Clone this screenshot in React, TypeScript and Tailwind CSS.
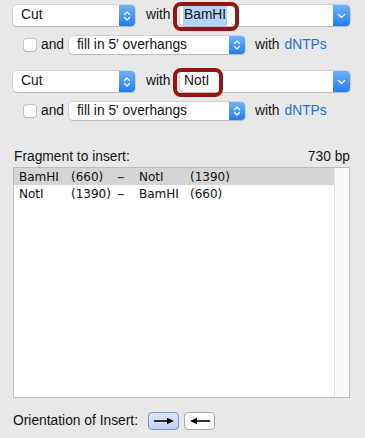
import React from "react";

const Stepper = () => (
  <div className="flex h-full w-[16px] items-center justify-center rounded-r-[4px] bg-gradient-to-b from-[#6cb1fb] to-[#1f7cf5]">
    <svg width="8" height="12" viewBox="0 0 8 12" fill="none" stroke="white" strokeWidth="1.3" strokeLinecap="round" strokeLinejoin="round">
      <path d="M1.5 4.5 L4 2 L6.5 4.5" />
      <path d="M1.5 7.5 L4 10 L6.5 7.5" />
    </svg>
  </div>
);

const Popup = ({ label, w, h }: { label: string; w: string; h: string }) => (
  <div className={`flex ${w} ${h} items-stretch rounded-[4px] bg-white shadow-[0_0_0_0.5px_rgba(0,0,0,0.18),0_1px_1px_rgba(0,0,0,0.12)]`}>
    <div className="flex flex-1 items-center pl-[8px]">{label}</div>
    <Stepper />
  </div>
);

const CutRow = ({ enzyme, hl }: { enzyme: string; hl: string }) => (
  <div className="flex flex-col">
    <div className="flex h-[21px] items-center">
      <Popup label="Cut" w="w-[122px]" h="h-[21px]" />
      <span className="w-[45px] pl-[11px]">with</span>
      <div className="relative flex h-[21px] w-[170px] items-stretch rounded-[4px] bg-white shadow-[0_0_0_0.5px_rgba(0,0,0,0.2),0_1px_1px_rgba(0,0,0,0.1)]">
        <div className="flex flex-1 items-center pl-[3px]">
          <span className={enzyme === "BamHI" ? "bg-[#b3d4fc] px-[1px]" : "px-[1px]"}>{enzyme}</span>
        </div>
        <div className="flex w-[17px] items-center justify-center rounded-r-[4px] bg-gradient-to-b from-[#6cb1fb] to-[#1f7cf5]">
          <svg width="9" height="6" viewBox="0 0 9 6" fill="none" stroke="white" strokeWidth="1.4" strokeLinecap="round" strokeLinejoin="round">
            <path d="M1.5 1.5 L4.5 4.5 L7.5 1.5" />
          </svg>
        </div>
        <div className={`absolute left-[-7px] top-[-3px] h-[29px] ${hl} rounded-[8px] border-4 border-[#951515]`} />
      </div>
    </div>
    <div className="mt-[10px] flex h-[18px] items-center pl-[11px]">
      <div className="h-[12px] w-[12px] rounded-[2px] bg-white shadow-[0_0_0_0.5px_rgba(0,0,0,0.3),0_1px_1px_rgba(0,0,0,0.08)]" />
      <span className="ml-[5px] w-[28px]">and</span>
      <Popup label="fill in 5' overhangs" w="w-[176px]" h="h-[18px]" />
      <span className="ml-[10px]">with</span>
      <span className="ml-[5px] text-[#1f6fd6]">dNTPs</span>
    </div>
  </div>
);

const rows = [
  ["BamHI", "(660)", "NotI", "(1390)"],
  ["NotI", "(1390)", "BamHI", "(660)"],
];

const Arrow = ({ left }: { left?: boolean }) => (
  <svg width="22" height="8" viewBox="0 0 22 8" className={left ? "rotate-180" : ""}>
    <path d="M1 4 H15" stroke="black" strokeWidth="1.6" />
    <path d="M14 0.8 L21 4 L14 7.2 Z" fill="black" />
  </svg>
);

export default function App() {
  return (
    <div className="h-[438px] w-[365px] bg-[#e8e8e8] pl-[13px] pt-[5px] font-['Liberation_Sans',Arial,sans-serif] text-[13.8px] text-[#141414]">
      <CutRow enzyme="BamHI" hl="w-[66px]" />
      <div className="mt-[17px]">
        <CutRow enzyme="NotI" hl="w-[50px]" />
      </div>

      <div className="mt-[29px] flex w-[337px] items-center justify-between pl-[1px] leading-[16px]">
        <span>Fragment to insert:</span>
        <span>730 bp</span>
      </div>

      <div className="mt-[2px] flex h-[231px] w-[337px] border border-[#bdbdbd] bg-white font-['DejaVu_Sans',sans-serif] text-[12px] text-[#111]">
        <div className="flex-1">
          {rows.map((r, i) => (
            <div
              key={i}
              className={`grid h-[17px] grid-cols-[52px_46px_22px_51px_1fr] items-center pl-[5px] ${i === 0 ? "bg-[#d5d5d5]" : ""}`}
            >
              <span>{r[0]}</span>
              <span>{r[1]}</span>
              <span className="text-[15px] leading-[17px] text-[#333]">–</span>
              <span>{r[2]}</span>
              <span>{r[3]}</span>
            </div>
          ))}
        </div>
        <div className="w-[15px] border-l border-[#e3e3e3] bg-[#fafafa]" />
      </div>

      <div className="mt-[14px] flex h-[18px] items-center">
        <span>Orientation of Insert:</span>
        <div className="ml-[10px] flex h-[18px] w-[31px] items-center justify-center rounded-[4px] border border-[#7d8fcf] bg-gradient-to-b from-[#dbe6fb] to-[#bfd2f6]">
          <Arrow />
        </div>
        <div className="ml-[5px] flex h-[18px] w-[31px] items-center justify-center rounded-[4px] border border-[#a8a8a8] bg-white">
          <Arrow left />
        </div>
      </div>
    </div>
  );
}
